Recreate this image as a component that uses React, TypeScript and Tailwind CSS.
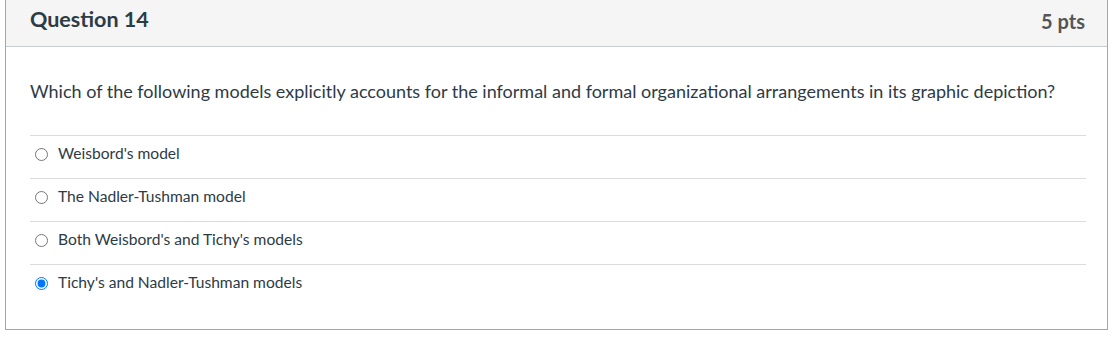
import { useState } from "react";

const options = [
  "Weisbord's model",
  "The Nadler-Tushman model",
  "Both Weisbord's and Tichy's models",
  "Tichy's and Nadler-Tushman models",
];

export default function App() {
  const [selected, setSelected] = useState(3);

  return (
    <div className="bg-white w-[1116px] h-[343px]" style={{ fontFamily: "Lato, 'Liberation Sans', sans-serif" }}>
      <div className="ml-[5px] w-[1103px] border-x border-b border-[#a6a6a6] text-[#2d3b45]">
        <div className="h-[47px] bg-[#f5f5f5] border-b border-[#c7cdd1] flex justify-between pl-[24px] pr-[22px]">
          <h2 className="pt-[6px] text-[21.5px] leading-[26px] font-bold">Question 14</h2>
          <span className="pt-[8px] text-[20px] leading-[26px] font-bold text-[#555]">5 pts</span>
        </div>
        <div className="pl-[24px] pr-[21px] pt-[31px] pb-[22px]">
          <p className="text-[18px] leading-[26px] mb-[31px]">
            Which of the following models explicitly accounts for the informal and formal organizational arrangements in its graphic depiction?
          </p>
          {options.map((opt, i) => (
            <label key={opt} className="h-[43px] pb-[6px] flex items-center text-[15.6px] border-t border-[#dcdcdc]">
              <input
                type="radio"
                name="q14"
                checked={selected === i}
                onChange={() => setSelected(i)}
                className="w-[13px] h-[13px] ml-[5px] mt-[1px]"
              />
              <span className="ml-[10px]">{opt}</span>
            </label>
          ))}
        </div>
      </div>
    </div>
  );
}
